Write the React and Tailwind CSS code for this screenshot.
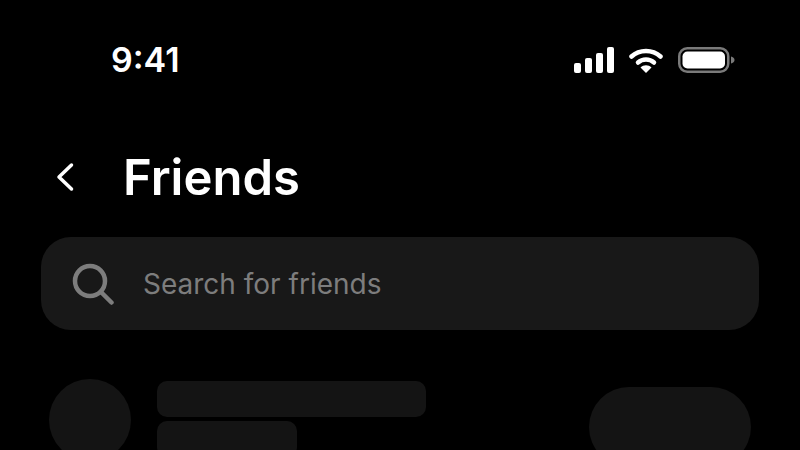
export default function App() {
  return (
    <div className="h-[450px] w-[800px] overflow-hidden bg-black font-['Inter',sans-serif] text-white">
      {/* status bar */}
      <div className="flex h-[120px] items-center justify-between pl-[111px] pr-[65px]">
        <span className="text-[34px] font-semibold leading-none">9:41</span>
        <div className="flex items-center">
          <svg width="40" height="26" viewBox="0 0 40 26" fill="#fff">
            <rect x="0" y="16" width="7" height="10" rx="2" />
            <rect x="11" y="11" width="7" height="15" rx="2" />
            <rect x="22" y="6" width="7" height="20" rx="2" />
            <rect x="33" y="0" width="7" height="26" rx="2" />
          </svg>
          <svg className="ml-[15px]" width="34" height="26" viewBox="0 0 34 26" fill="none">
            <path d="M2.500 9.500C10.500 2 23.500 2 31.500 9.500" stroke="#fff" strokeWidth="4.500" strokeLinecap="round" />
            <path d="M9 15.500C13.500 11.500 20.500 11.500 25 15.500" stroke="#fff" strokeWidth="4.500" strokeLinecap="round" />
            <path d="M11.500 20.500C14.500 17.500 19.500 17.500 22.500 20.500L17 26Z" fill="#fff" />
          </svg>
          <svg className="ml-[15px]" width="57" height="26" viewBox="0 0 57 26" fill="none">
            <rect x="1.250" y="1.250" width="49" height="23.500" rx="8" stroke="#7a7a7a" strokeWidth="2.500" />
            <rect x="4.500" y="4.500" width="42.500" height="17" rx="5" fill="#fff" />
            <path d="M53 9.500C55 10 56.500 11.300 56.500 13C56.500 14.700 55 16 53 16.500Z" fill="#7a7a7a" />
          </svg>
        </div>
      </div>

      {/* header */}
      <div className="mt-[21px] flex h-[72px] items-center pl-[55px]">
        <svg width="20" height="32" viewBox="0 0 20 32" fill="none">
          <path d="M16.500 4L4 16L16.500 28" stroke="#fff" strokeWidth="3.500" strokeLinecap="round" strokeLinejoin="round" />
        </svg>
        <h1 className="ml-[48px] text-[49px] font-semibold leading-none">Friends</h1>
      </div>

      {/* search */}
      <div className="mx-[41px] mt-[24px] flex h-[93px] items-center rounded-[30px] bg-[#181818] pl-[31px]">
        <svg width="42" height="42" viewBox="0 0 42 42" fill="none">
          <circle cx="18" cy="18" r="15" stroke="#7d7d7d" strokeWidth="4.500" />
          <path d="M29 29L39.500 39.500" stroke="#7d7d7d" strokeWidth="4.500" strokeLinecap="round" />
        </svg>
        <span className="ml-[29px] text-[28px] leading-none text-[#7d7d7d]">Search for friends</span>
      </div>

      {/* placeholder row */}
      <div className="ml-[49px] mr-[49px] mt-[49px] flex items-start">
        <div className="h-[82px] w-[82px] shrink-0 rounded-full bg-[#141414]" />
        <div className="ml-[26px] mt-[2px] flex flex-col gap-[4px]">
          <div className="h-[36px] w-[269px] rounded-[10px] bg-[#141414]" />
          <div className="h-[36px] w-[140px] rounded-[10px] bg-[#141414]" />
        </div>
        <div className="ml-auto mt-[8px] h-[80px] w-[162px] rounded-[40px] bg-[#141414]" />
      </div>
    </div>
  );
}
